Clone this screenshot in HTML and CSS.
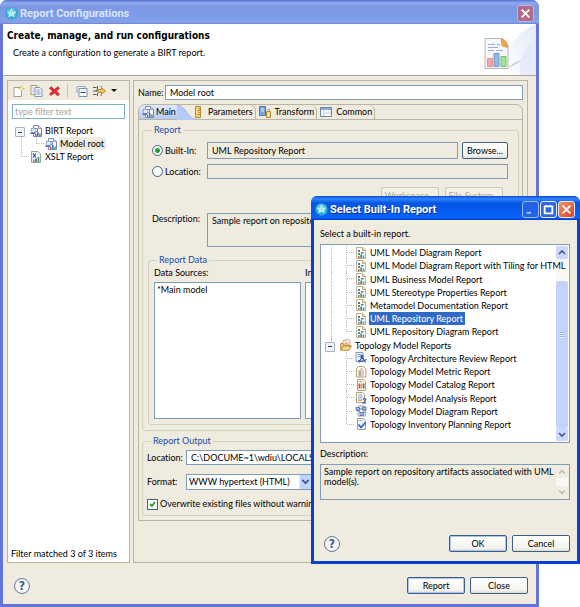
FILE: index.html
```html
<!DOCTYPE html>
<html lang="en">
<head>
<meta charset="utf-8">
<title>Report Configurations</title>
<link rel="stylesheet" href="styles.css">
</head>
<body>
<svg class="defs" aria-hidden="true">
  <symbol id="orb" viewBox="0 0 14 14"><circle cx="7" cy="7" r="6.6" fill="#2fa9c6"/><circle cx="7" cy="6" r="5" fill="#58c5d8"/><path d="M7 2.2 4 10.5M7 2.2l3 8.3M2.8 5.6h8.4L4 10.5M11.2 5.6 4.6 8.6M2.8 5.6l7.2 4.9" stroke="#d5f6fa" stroke-width=".9" fill="none"/></symbol>
  <symbol id="sheet" viewBox="0 0 12 12"><path d="M1.5.5h6.500l2.500 2.500v8.500h-9z" fill="#fdfdf4" stroke="#b9b592"/><path d="M7.500 .5v3h3" fill="#f3d88c" stroke="#b79b58" stroke-width=".8"/><path d="M3 3h2v2H3zM6 5h2.500v1.500H6z" fill="#4775b8"/><path d="M3 6h2v2H3z" fill="#3c9a83"/><path d="M3 9h1.500v2H3z" fill="#d3544e"/><path d="M5.300 7.500H7V11H5.300z" fill="#4879c4"/><path d="M7.700 8.500h1.600V11H7.700z" fill="#47a557"/></symbol>
  <symbol id="birt" viewBox="0 0 12 12"><path d="M3.500.5h5l3 3v8h-8z" fill="#fafaff" stroke="#7788b8"/><path d="M8.500.5v3h3" fill="#cdd8f1" stroke="#7788b8" stroke-width=".8"/><path d="M1.500 3.500h6v3h-6z" fill="#fff" stroke="#7385b5"/><circle cx="3.500" cy="5.500" r="2.500" fill="#e2e9f8" stroke="#8190b9" stroke-width=".8"/><path d="M.5 7.500h5v1.500h-5z" fill="#4769b4"/><path d="M5 9h1.500v2H5z" fill="#df4f4f"/><path d="M7 7h1.600v4H7z" fill="#3c74cb"/><path d="M9.200 8.500h1.500V11H9.200z" fill="#3a9d50"/></symbol>
  <symbol id="xslt" viewBox="0 0 12 12"><path d="M1.500.5h6.500l2.500 2.500v8.500h-9z" fill="#eef4fb" stroke="#9aa184"/><path d="M3 2.500 6 6.500M6 2.500 3 6.500" stroke="#244f9e" stroke-width="1.200"/><path d="M3 8.500h1.500V11H3z" fill="#d75450"/><path d="M5.300 7.500H7V11H5.300z" fill="#3b6fc0"/><path d="M7.700 6h1.600v5H7.700z" fill="#3a9d68"/></symbol>
  <symbol id="folder" viewBox="0 0 12 12"><path d="M3 1.500 8.500.5l1.500 1V7H3z" fill="#fff" stroke="#b18d5c" stroke-width=".8"/><path d="M4.500 3h4M4.500 4.500h4" stroke="#db9c78" stroke-width=".8"/><path d="M.8 11V4.500h2L4 6h5v1" fill="#f3cf7a" stroke="#ad7b28" stroke-width=".9"/><path d="M.8 11.200 3.200 7h8.300L9 11.200z" fill="#fbdf91" stroke="#ad7b28" stroke-width=".9"/></symbol>
  <symbol id="review" viewBox="0 0 12 12"><path d="M1 .5h7v9H1z" fill="#eef3fc" stroke="#8a9cc4"/><path d="M2.500 2.500h4M2.500 4.500h3" stroke="#809fd2"/><circle cx="7" cy="4.500" r="1.700" fill="#3b62b7"/><path d="M7 5 4 10.500M7 5l3.500 5.500M3 8.500q4 2 8.500-1" stroke="#3a5cab" stroke-width="1.200" fill="none"/></symbol>
  <symbol id="metric" viewBox="0 0 12 12"><path d="M3.500.5h5l2.500 2.500v8H1.500V2.500z" fill="#fffaf1" stroke="#b3a276"/><path d="M5 3h3M3 5h6M3 7h6M3 9h6" stroke="#d59a85"/><path d="M5 4.500v6" stroke="#688bc8"/></symbol>
  <symbol id="catalog" viewBox="0 0 12 12"><path d="M2.500.5h6l2 2v9h-8z" fill="#fffaf1" stroke="#b3a276"/><path d="M4 2.500h3" stroke="#d8a54f"/><path d="M3.500 4.500h2v5h-2z" fill="#d35a42"/><path d="M6 4.500h1.500v5H6z" fill="#e2a52f"/><path d="M8 4.500h1.500v5H8z" fill="#4974bd"/></symbol>
  <symbol id="analysis" viewBox="0 0 12 12"><path d="M1.500.5h6l2 2v8h-8z" fill="#fffaf1" stroke="#b3a276"/><path d="M3 3h4M3 5h5M3 7h4" stroke="#7f9fd2"/><path d="M3 8.500h4" stroke="#dda35c"/><path d="M7.800 7.500q2.700-2 3 0 0 1-2.500 3.500h3" stroke="#2756b5" stroke-width="1.200" fill="none"/></symbol>
  <symbol id="diagram" viewBox="0 0 12 12"><path d="M3 1h6l1.500 1.500V11H3z" fill="#f3f5fb" stroke="#a4a9ba"/><path d="M1 2.500h3.500v3H1zM7.500 2h3.500v3H7.500zM5 7.500h3.500v3H5z" fill="#a9bce3" stroke="#5871ab" stroke-width=".9"/><path d="M4.500 4h3M9 5v3M3 5.500 5.500 8" stroke="#5871ab" fill="none"/></symbol>
  <symbol id="inventory" viewBox="0 0 12 12"><path d="M2.500.5h6l2 2v9h-8z" fill="#e9f2fd" stroke="#af9e75"/><path d="M4 2.500h3" stroke="#d7a45b"/><path d="M3.500 6.500 6 9.500l4.500-5" stroke="#2568c5" stroke-width="1.700" fill="none"/></symbol>
  <symbol id="newdoc" viewBox="0 0 12 12"><path d="M1.500 2.500h7.500v9h-7.500z" fill="#fff" stroke="#a39f92"/><path d="M9 .5v6M6 3.500h6" stroke="#dab540"/><path d="M7 1.500l4 4M11 1.500l-4 4" stroke="#e8cf7d" stroke-width=".6"/><circle cx="9" cy="3.500" r="1.300" fill="#fff3ad"/></symbol>
  <symbol id="copy" viewBox="0 0 12 12"><path d="M.5 .5h6v9h-6z" fill="#fff" stroke="#b59a55"/><path d="M4.500 2.500h5l2 2v7h-7z" fill="#f1f5fd" stroke="#8795b8"/><path d="M6 5h3M6 7h4M6 9h4M2 3h1.500M2 5h1.500M2 7h1.500" stroke="#849fd1"/></symbol>
  <symbol id="remove" viewBox="0 0 12 12"><path d="M2.500 1.500 6 4.500l3.500-3 1.500 2L8 6l3 3-1.800 2L6 8l-3.500 2.500L1 9l3-3-3-2.500z" fill="#e72c36" stroke="#bd202b" stroke-width=".6"/></symbol>
  <symbol id="collapse" viewBox="0 0 12 12"><path d="M1.500 8V1.500h8V3" fill="#eef5fd" stroke="#88a6c8"/><path d="M3.500 3.500h8v8h-8z" fill="#f4f9ff" stroke="#6f93bd"/><path d="M5 7.500h5" stroke="#27496f"/></symbol>
  <symbol id="filter" viewBox="0 0 13 12"><path d="M0 2.500h3.500M0 6h3.500M0 9.500h3.500M4.500 1v3l-1.500 2h3M4.500 11V8" stroke="#55595e" fill="none"/><path d="M5 4.500h3.500v-2L12.500 6l-4 3.500v-2H5z" fill="#f0c55c" stroke="#a87b1c" stroke-width=".8"/><path d="M8 1v1M8 10v1" stroke="#55595e"/></symbol>
  <symbol id="ruler" viewBox="0 0 12 12"><path d="M3.500.5h5v11h-5z" fill="#f7d67a" stroke="#b18a2b"/><path d="M6.500 2.500h2M5.500 4.500h3M6.500 6.500h2M5.500 8.500h3" stroke="#94701d" stroke-width=".8"/></symbol>
  <symbol id="transform" viewBox="0 0 12 12"><path d="M.5.500h6v9h-6z" fill="#7ca3df" stroke="#5178b9"/><path d="M2 3h3M2 5h3" stroke="#e0ebfb"/><path d="M8 3.500h2.500V5" stroke="#999" fill="none"/><path d="M7.500 5.500h4v6h-4z" fill="#fbd886" stroke="#b68a2f"/><path d="M9 8h1v2H9z" fill="#fff"/></symbol>
  <symbol id="table" viewBox="0 0 12 12"><path d="M.5 1.500h11v9H.5z" fill="#f6faff" stroke="#6f81a4"/><path d="M1 2h10v2H1z" fill="#8fabd9"/><path d="M4 4v6M4.500 7h6.500" stroke="#c1cfe3"/></symbol>
</svg>

<main class="window">
  <header class="titlebar inactive">
    <svg class="orb"><use href="#orb"/></svg>
    <h1>Report Configurations</h1>
    <button class="cap close" aria-label="Close window"><svg viewBox="0 0 10 10"><path d="M1.500 1.500l7 7M8.500 1.500l-7 7"/></svg></button>
  </header>
  <section class="banner">
    <div>
      <h2>Create, manage, and run configurations</h2>
      <p>Create a configuration to generate a BIRT report.</p>
    </div>
    <svg class="art" viewBox="0 0 56 51" aria-hidden="true">
      <defs>
        <linearGradient id="sweep" x1="0" y1="1" x2="1" y2="0"><stop offset="0" stop-color="#fff"/><stop offset="1" stop-color="#e4eafb"/></linearGradient>
        <linearGradient id="shade"><stop offset="0" stop-color="#a8a5b5"/><stop offset="1" stop-color="#eceffc"/></linearGradient>
      </defs>
      <path d="M22 51Q26 12 56 0v51z" fill="url(#sweep)"/><path d="M40 51Q38 25 56 16v35z" fill="#dfe5fb" opacity=".6"/>
      <path d="M28 44 46 35 36 38z" fill="url(#shade)"/>
      <path d="M5 14.500h17l6 7v23h-23z" fill="#f4f6fd" stroke="#bab7a8"/>
      <path d="M21 14.500q6 1 7 9l-6-1.500z" fill="#f2a343" stroke="#c88e48" stroke-width=".6"/>
      <path d="M8 20.500h7M17 20.500h3M8 23.500h10M8 26.500h6M16 26.500h7" stroke="#9db0d4"/>
      <path d="M7.500 34.500h5v8h-5z" fill="#f8a8a4" stroke="#e5908c"/><path d="M14 29.500h5v13h-5z" fill="#8cbbe8" stroke="#6e9ace"/><path d="M21 32.500h5v10h-5z" fill="#a2e39a" stroke="#74bf6e"/>
    </svg>
  </section>

  <div class="columns">
    <aside class="configs">
      <div class="toolbar">
        <button aria-label="New"><svg><use href="#newdoc"/></svg></button>
        <button aria-label="Duplicate"><svg><use href="#copy"/></svg></button>
        <button aria-label="Delete"><svg><use href="#remove"/></svg></button>
        <i class="sep"></i>
        <button aria-label="Collapse all"><svg><use href="#collapse"/></svg></button>
        <button class="drop" aria-label="Filter"><svg><use href="#filter"/></svg><i class="caret"></i></button>
      </div>
      <input class="filter" type="text" placeholder="type filter text" aria-label="Filter">
      <ul class="tree">
        <li><i class="rail box first"></i><svg><use href="#birt"/></svg><span>BIRT Report</span></li>
        <li><i class="rail"></i><i class="branch last"></i><svg><use href="#birt"/></svg><span class="soft">Model root</span></li>
        <li><i class="rail last"></i><svg><use href="#xslt"/></svg><span>XSLT Report</span></li>
      </ul>
      <p class="status">Filter matched 3 of 3 items</p>
    </aside>

    <form class="editor">
      <div class="line"><label for="name">Name:</label><input id="name" type="text" value="Model root"></div>
      <div class="folder">
        <nav class="tabs">
          <button type="button" class="tab on"><svg><use href="#birt"/></svg>Main<svg class="curve" viewBox="0 0 24 15" preserveAspectRatio="none"><path d="M0 0C12 0 12 15 24 15H0z" fill="#b4cbf8"/><path d="M0 .5C12 .5 12 14.500 24 14.500" fill="none" stroke="#9fb0d6"/></svg></button>
          <button type="button" class="tab"><svg><use href="#ruler"/></svg>Parameters</button>
          <button type="button" class="tab"><svg><use href="#transform"/></svg>Transform</button>
          <button type="button" class="tab"><svg><use href="#table"/></svg>Common</button>
        </nav>
        <div class="pane">
          <fieldset class="report">
            <legend>Report</legend>
            <div class="grid">
              <label class="opt"><input type="radio" name="src" checked>Built-In:</label>
              <div class="pair"><input class="tall" type="text" value="UML Repository Report" readonly aria-label="Built-in report"><button type="button" class="btn browse">Browse...</button></div>
              <label class="opt"><input type="radio" name="src">Location:</label>
              <input type="text" class="gray" readonly aria-label="Report location">
              <div class="buttons"><button type="button" class="btn" disabled>Workspace...</button><button type="button" class="btn" disabled>File System...</button></div>
              <label for="desc" class="desc-label">Description:</label>
              <textarea id="desc" class="desc" readonly>Sample report on repository artifacts associated with UML model(s).</textarea>
            </div>
            <fieldset class="data">
              <legend>Report Data</legend>
              <div class="lists">
                <div><label for="sources">Data Sources:</label><select id="sources" multiple><option>*Main model</option></select></div>
                <div><label for="instances">Instances:</label><select id="instances" multiple></select></div>
              </div>
            </fieldset>
          </fieldset>
          <fieldset class="output">
            <legend>Report Output</legend>
            <div class="line"><label for="loc">Location:</label><input id="loc" type="text" value="C:\DOCUME~1\wdiu\LOCALS~1\Temp"></div>
            <div class="line format"><label for="fmt">Format:</label><span class="combo"><select id="fmt"><option>WWW hypertext (HTML)</option></select><svg viewBox="0 0 11 13"><rect width="11" height="13" rx="1" fill="#c3d3fb"/><path d="M2.500 4.500l3 3 3-3" fill="none" stroke="#3d5b8f" stroke-width="1.800"/></svg></span></div>
            <label class="opt check"><input type="checkbox" checked>Overwrite existing files without warning</label>
          </fieldset>
        </div>
      </div>
    </form>
  </div>

  <footer class="actions">
    <button class="help" aria-label="Help"></button>
    <button class="btn default">Report</button>
    <button class="btn">Close</button>
  </footer>
</main>

<section class="dialog" role="dialog" aria-labelledby="dlg">
  <header class="titlebar active">
    <svg class="orb"><use href="#orb"/></svg>
    <h1 id="dlg">Select Built-In Report</h1>
    <button class="cap min" aria-label="Minimize"><svg viewBox="0 0 10 10"><path d="M1.500 8h4"/></svg></button>
    <button class="cap max" aria-label="Maximize"><svg viewBox="0 0 10 10"><path d="M1.500 2h7M1.500 1.500v7h7v-7"/></svg></button>
    <button class="cap close" aria-label="Close dialog"><svg viewBox="0 0 10 10"><path d="M1.500 1.500l7 7M8.500 1.500l-7 7"/></svg></button>
  </header>
  <div class="dialog-body">
    <p>Select a built-in report.</p>
    <div class="listbox">
      <ul class="tree">
        <li><i class="rail"></i><i class="branch"></i><svg><use href="#sheet"/></svg><span>UML Model Diagram Report</span></li>
        <li><i class="rail"></i><i class="branch"></i><svg><use href="#sheet"/></svg><span>UML Model Diagram Report with Tiling for HTML</span></li>
        <li><i class="rail"></i><i class="branch"></i><svg><use href="#sheet"/></svg><span>UML Business Model Report</span></li>
        <li><i class="rail"></i><i class="branch"></i><svg><use href="#sheet"/></svg><span>UML Stereotype Properties Report</span></li>
        <li><i class="rail"></i><i class="branch"></i><svg><use href="#sheet"/></svg><span>Metamodel Documentation Report</span></li>
        <li><i class="rail"></i><i class="branch"></i><svg><use href="#sheet"/></svg><span class="picked">UML Repository Report</span></li>
        <li><i class="rail"></i><i class="branch last"></i><svg><use href="#sheet"/></svg><span>UML Repository Diagram Report</span></li>
        <li><i class="rail box last"></i><svg><use href="#folder"/></svg><span>Topology Model Reports</span></li>
        <li><i class="rail none"></i><i class="branch"></i><svg><use href="#review"/></svg><span>Topology Architecture Review Report</span></li>
        <li><i class="rail none"></i><i class="branch"></i><svg><use href="#metric"/></svg><span>Topology Model Metric Report</span></li>
        <li><i class="rail none"></i><i class="branch"></i><svg><use href="#catalog"/></svg><span>Topology Model Catalog Report</span></li>
        <li><i class="rail none"></i><i class="branch"></i><svg><use href="#analysis"/></svg><span>Topology Model Analysis Report</span></li>
        <li><i class="rail none"></i><i class="branch"></i><svg><use href="#diagram"/></svg><span>Topology Model Diagram Report</span></li>
        <li><i class="rail none"></i><i class="branch last"></i><svg><use href="#inventory"/></svg><span>Topology Inventory Planning Report</span></li>
      </ul>
      <div class="scroll">
        <svg viewBox="0 0 12 13"><path d="M3 8l3-3 3 3"/></svg>
        <div class="track"><div class="thumb"></div></div>
        <svg viewBox="0 0 12 13"><path d="M3 5l3 3 3-3"/></svg>
      </div>
    </div>
    <label for="about">Description:</label>
    <div class="about">
      <textarea id="about" readonly>Sample report on repository artifacts associated with UML model(s).</textarea>
      <div class="scroll off">
        <svg viewBox="0 0 12 13"><path d="M3 8l3-3 3 3"/></svg>
        <div class="track"></div>
        <svg viewBox="0 0 12 13"><path d="M3 5l3 3 3-3"/></svg>
      </div>
    </div>
    <footer class="actions">
      <button class="help" aria-label="Help"></button>
      <button class="btn default">OK</button>
      <button class="btn">Cancel</button>
    </footer>
  </div>
</section>
</body>
</html>
```
FILE: styles.css
```css
* { box-sizing: border-box; }

:root {
  --face: #efebde;
  --edge: #b9b5a5;
  --field: #7f9db9;
  --group: #d3d0bf;
  --blue: #1c4aa8;
}

body, h1, h2, p, ul, fieldset { margin: 0; padding: 0; }

body, button, input, select, textarea {
  font: 9px/12px Lato, Roboto, sans-serif;
  font-variant-ligatures: none;
  color: #000;
}

body { position: relative; background: #fff; overflow: hidden; }
button { padding: 0; border: 0; background: none; }
ul { list-style: none; }
i { font-style: normal; }
input, textarea, select { min-width: 0; margin: 0; border: 1px solid var(--field); border-radius: 0; outline: 0; }
input[type="text"] { height: 15px; padding: 0 4px; background: #fff; }
textarea { resize: none; overflow: hidden; }
.defs { position: absolute; width: 0; height: 0; }

/* windows */
.window {
  display: flex;
  flex-direction: column;
  min-height: 100vh;
  margin-right: 41px;
  border: solid #6374d8;
  border-width: 0 3px 3px;
  border-radius: 7px 7px 0 0;
  background: var(--face);
}

.titlebar { display: flex; align-items: center; gap: 1px; height: 24px; }
.titlebar h1 { flex: 1; font: bold 11px/14px Roboto, "DejaVu Sans Condensed", sans-serif; margin-left: 1px; padding-top: 1px; }
.orb { width: 13px; height: 13px; }
.inactive {
  margin: 0 -3px;
  padding: 2px 5px 0;
  border-radius: 7px 7px 0 0;
  background: linear-gradient(#5770cf, #8fa8ef 12%, #7b98e4 30%, #7d9de8 75%, #86a2e8 92%, #6e84d6);
}
.inactive h1 { color: #dbe4fa; }
.active {
  border-radius: 6px 6px 0 0;
  background: linear-gradient(#0a4ad0, #2f86ff 12%, #0555e4 30%, #0560f4 75%, #0663fb 90%, #003fc6);
}
.active h1 { color: #fff; text-shadow: 1px 1px #0a2f8b; }

.cap { width: 17px; height: 17px; padding: 2px; border: 1px solid #e4ebff; border-radius: 3px; background: #2f67e8; }
.cap svg { display: block; width: 11px; height: 11px; fill: none; stroke: #fff; stroke-width: 1.700; }
.cap.min { opacity: .65; }
.active .close { background: linear-gradient(135deg, #f09474, #d9431d); }
.inactive .close { border-color: #b8b9e4; background: #b36a87; }

/* banner */
.banner {
  display: flex;
  justify-content: space-between;
  height: 52px;
  border-bottom: 1px solid #aaa79a;
  background: #fff;
}
.banner > div { padding: 5px 4px; }
.banner h2 { font: bold 10px/14px "DejaVu Sans Condensed", Roboto, sans-serif; }
.banner p { margin: 4px 0 0 6px; }
.art { width: 56px; height: 51px; }

/* columns */
.columns { display: flex; flex: 1; gap: 3px; padding: 4px 8px 0 4px; }
.configs { display: flex; flex-direction: column; width: 123px; border: 1px solid var(--edge); background: #fff; }
.toolbar { display: flex; align-items: center; gap: 5px; height: 19px; padding-left: 4px; background: var(--face); }
.toolbar button, .toolbar svg { display: block; width: 13px; height: 12px; }
.toolbar .drop { display: flex; align-items: center; gap: 5px; width: 24px; }
.toolbar .sep { width: 1px; height: 14px; margin: 0 2px 0 1px; background: #c9c5b4; }
.caret { border: 3px solid transparent; border-top-color: #111; border-bottom: 0; }
.filter { margin: 4px; }
.configs .filter { padding: 0 2px; border-color: #7db0c1; }
.filter::placeholder { color: #a5a59d; opacity: 1; }
.status { margin: auto 3px 2px; }

/* trees */
.tree li { display: flex; align-items: center; height: 13px; white-space: nowrap; }
.tree svg { flex: none; width: 12px; height: 12px; margin: 0 2px 0 1px; }
.tree span { line-height: 13px; padding: 0 2px 0 1px; }
.configs .tree { padding: 1px 5px; }
.rail, .branch { position: relative; flex: none; align-self: stretch; width: 16px; }
.branch { width: 15px; }
.rail::before, .branch::before { content: ""; position: absolute; top: 0; bottom: 0; left: 8px; border-left: 1px dotted #bbb; }
.branch::before { left: 7px; }
.branch::after, .rail.last::after { content: ""; position: absolute; top: 6px; left: 8px; right: 0; border-top: 1px dotted #bbb; }
.last::before { bottom: 50%; }
.first::before { top: 50%; }
.rail.none::before { display: none; }
.rail.box::after {
  content: "";
  position: absolute;
  inset: 3px 4px auto auto;
  width: 8px;
  height: 8px;
  border: 1px solid #a3b2c8;
  border-radius: 1px;
  background: linear-gradient(#23364f, #23364f) center / 4px 1px no-repeat #f1f4f6;
}
.soft { background: var(--face); }
.tree .picked { background: #316ac5; color: #fff; }

/* editor */
.editor { flex: 1; min-width: 0; padding: 4px; border: 1px solid var(--edge); }
.line { display: flex; align-items: center; }
.line input { flex: 1; }
.editor > .line label { width: 27px; white-space: nowrap; }
.folder { margin-top: 4px; border: 1px solid var(--edge); border-radius: 7px 7px 0 0; }
.tabs { position: relative; z-index: 0; display: flex; height: 15px; border-bottom: 1px solid var(--edge); }
.tab { display: flex; align-items: center; gap: 4px; padding: 0 2px 0 3px; border-right: 1px solid var(--edge); border-radius: 0 6px 0 0; }
.tab svg { width: 12px; height: 12px; }
.tab.on { position: relative; margin-right: 12px; padding: 0 1px 0 3px; gap: 2px; border: 0; border-radius: 7px 0 0; background: linear-gradient(#dfe9ff, #b4cbf8); }
.tab .curve { position: absolute; left: 100%; top: 0; width: 20px; height: 15px; z-index: -1; }
.pane { padding: 4px 3px 4px; }

fieldset { min-width: 0; border: 1px solid var(--group); border-radius: 3px; }
legend { margin-left: 4px; padding: 0 2px; color: var(--blue); line-height: 12px; }
.report { padding: 6px 5px 5px; }
.grid { display: grid; grid-template-columns: 55px 1fr; align-items: center; gap: 5px 0; padding: 0 5px 0 4px; }
.opt { display: flex; align-items: center; gap: 2px; white-space: nowrap; }
.pair { display: flex; gap: 4px; }
.pair input { flex: 1; }
.grid input[type="text"] { background: var(--face); }
.grid .tall { height: 17px; }
.buttons { grid-column: 2; display: flex; justify-content: flex-end; gap: 6px; padding: 3px 5px 4px 0; }
.desc-label { align-self: start; }
.desc { display: block; width: 100%; height: 34px; padding: 1px 4px; background: var(--face); }

input[type="radio"] { appearance: none; width: 11px; height: 11px; border: 1px solid #426488; border-radius: 50%; background: #fbfbf8; }
input[type="radio"]:checked { background: radial-gradient(#28a428 0 2px, #fbfbf8 3px); }
input[type="checkbox"] {
  appearance: none;
  width: 11px;
  height: 11px;
  border: 1px solid #426488;
  background: #fff url("data:image/svg+xml,%3Csvg xmlns='http://www.w3.org/2000/svg' viewBox='0 0 9 9'%3E%3Cpath d='M2 4l2 2 3-4' fill='none' stroke='%2321a121' stroke-width='1.800'/%3E%3C/svg%3E");
}

.data { margin-top: 7px; padding: 1px 5px 5px; }
.data legend { margin-left: 3px; }
.lists { display: grid; grid-template-columns: 147px 1fr; gap: 4px; }
.lists select { display: block; width: 100%; height: 137px; margin-top: 3px; padding: 0; background: #fff; overflow: hidden; }
.lists option { min-height: 12px; padding: 1px 2px; }

.output { margin-top: 4px; padding: 3px 4px 5px; }
.output .line label { width: 39px; }
.output .format { margin: 9px 0 8px; }
.combo { position: relative; width: 127px; }
.combo select { appearance: none; display: block; width: 100%; height: 16px; padding: 0 2px; background: #fff; }
.combo svg { position: absolute; top: 1px; right: 1px; width: 13px; height: 14px; pointer-events: none; }

/* buttons */
.btn { flex: none; width: 58px; height: 17px; border: 1px solid #3c5f86; border-radius: 2px; background: linear-gradient(#fff, #f4f3ee 80%, #dedbd0); white-space: nowrap; }
.btn.browse { width: 46px; }
.btn.default { box-shadow: inset 0 0 0 1px #a9c4f5; }
.btn:disabled { border-color: #cbc8b9; background: #f3f1e7; color: #aaa798; }
.help { width: 16px; height: 16px; margin-right: auto; border: 1px solid #66789d; border-radius: 50%; background: #f5f5f5; color: #44598a; font: bold 12px/14px "DejaVu Sans Condensed", sans-serif; }
.help::before { content: "?"; }
.actions { display: flex; align-items: center; gap: 5px; }
.window > .actions { height: 41px; padding: 4px 8px 0 11px; }

/* dialog */
.dialog { position: absolute; top: 196px; right: 0; width: 269px; border: solid #0a3fd2; border-width: 0 3px 3px; border-radius: 7px 7px 0 0; background: var(--face); }
.dialog .titlebar { margin: 0 -3px; padding: 2px 5px 0 4px; }
.dialog-body { padding: 8px 7px 9px 6px; }
.listbox { display: flex; height: 199px; margin: 4px 0 5px; border: 1px solid var(--field); background: #fff; }
.listbox .tree { position: relative; z-index: 1; flex: 1; display: flex; flex-direction: column; height: 186px; padding: 1px 0 0 2px; min-width: 0; }
.listbox .tree li { flex: 1; }
.scroll { display: flex; flex-direction: column; width: 12px; margin: 1px; background: #f9f8f4; }
.scroll svg { width: 12px; height: 13px; border-radius: 2px; background: #c9d8fc; fill: none; stroke: #3d5b8f; stroke-width: 1.700; }
.track { display: flex; flex: 1; padding-top: 22px; }
.thumb { flex: 1; border-radius: 2px; background: repeating-linear-gradient(#9db5ec 0 1px, #e7eefe 1px 2px) center 36% / 5px 6px no-repeat #c3d3fb; }
.about { display: flex; height: 36px; margin-top: 4px; border: 1px solid var(--field); }
.about textarea { flex: 1; height: 34px; padding: 2px 0 2px 3px; border: 0; background: none; line-height: 10px; }
.scroll.off { margin: 1px 1px 1px 0; }
.scroll.off svg { height: 12px; background: #efede4; stroke: #c0beb3; }
.off .track { padding: 0; }
.dialog .actions { margin-top: 35px; padding-left: 4px; }
```
